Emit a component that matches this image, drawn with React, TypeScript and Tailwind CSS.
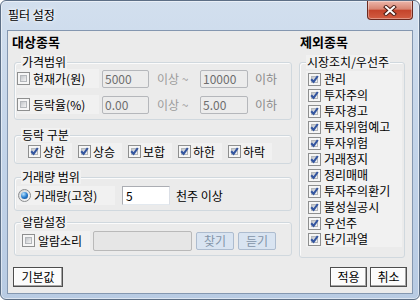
import React from "react";

const Check = ({ checked = false }: { checked?: boolean }) => (
    <span className="relative flex h-[13px] w-[13px] shrink-0 border border-[#8e8f8f] bg-[#f6f6f6] p-[2px]">
        <span className="flex-1 border border-[#b4b7bb] bg-gradient-to-br from-[#c3c6ca] to-[#f4f4f4]" />
        {checked && (
            <svg className="absolute left-0 top-0" width="11" height="11" viewBox="0 0 11 11">
                <path d="M2.2 5.2 L4.6 7.8 L8.8 2" fill="none" stroke="#3355a0" strokeWidth="2.1" />
            </svg>
        )}
    </span>
);

const Radio = () => (
    <span className="flex h-[13px] w-[13px] shrink-0 items-center justify-center rounded-full border border-[#8a8c8e] bg-gradient-to-br from-[#d2d4d6] to-[#fafafa]">
        <span className="h-[7px] w-[7px] rounded-full bg-[radial-gradient(circle_at_35%_30%,#b9e4ff,#2a7fd0_50%,#0b3f80)]" />
    </span>
);

const Group = ({
    label,
    className,
    children,
}: {
    label: string;
    className?: string;
    children: React.ReactNode;
}) => (
    <fieldset
        className={`rounded-[3px] border border-[#d0d8de] shadow-[inset_1px_1px_0_#fbfbfb] ${className}`}
    >
        <legend className="ml-[6px] bg-[#f1f1f1] px-[1px] leading-[14px]">{label}</legend>
        {children}
    </fieldset>
);

const Field = ({ value, className }: { value: string; className?: string }) => (
    <span
        className={`flex h-[18px] items-start rounded-[2px] border border-[#b5b7bb] bg-[#ececec] pl-[2px] pt-[1px] leading-[14px] text-[#6e6e6e] ${className}`}
    >
        {value}
    </span>
);

const Btn = ({ children, className }: { children: React.ReactNode; className?: string }) => (
    <button
        className={`flex h-[20px] items-center justify-center border border-[#4e4e4e] bg-[#fbfbfb] leading-[14px] shadow-[inset_-1px_-1px_0_#a6a6a6,inset_1px_1px_0_#fff] ${className}`}
    >
        {children}
    </button>
);

const exclude = [
    "관리",
    "투자주의",
    "투자경고",
    "투자위험예고",
    "투자위험",
    "거래정지",
    "정리매매",
    "투자주의환기",
    "불성실공시",
    "우선주",
    "단기과열",
];

export default function App() {
    return (
        <div className="h-[300px] w-[420px] bg-white font-['Noto_Sans_CJK_KR','Noto_Sans',sans-serif] text-[12px] text-black">
            <div className="flex h-full w-full flex-col rounded-[6px] border border-[#5d6f86] bg-gradient-to-b from-[#d2dfee] via-[#c3d4e9] to-[#b8cbe3] shadow-[inset_0_0_0_1px_rgba(255,255,255,0.5)]">
                {/* title bar */}
                <div className="flex h-[29px] shrink-0 items-start justify-between">
                    <span className="pl-[7px] pt-[6px] leading-[16px] [text-shadow:0_0_6px_#fff,0_0_3px_#fff]">
                        필터 설정
                    </span>
                    <button className="mr-[6px] flex h-[19px] w-[46px] items-center justify-center rounded-b-[4px] border border-t-0 border-[#6b2a20] bg-[linear-gradient(#ecb6aa,#d88572_45%,#c4442b_52%,#d25d42)] shadow-[inset_0_0_0_1px_rgba(255,255,255,0.35)]">
                        <svg width="14" height="11" viewBox="0 0 14 11">
                            <path d="M3 2 L11 9 M11 2 L3 9" stroke="#4a1d16" strokeWidth="4" strokeLinecap="square" />
                            <path d="M3 2 L11 9 M11 2 L3 9" stroke="#fff" strokeWidth="2" strokeLinecap="square" />
                        </svg>
                    </button>
                </div>

                {/* client area */}
                <div className="mx-[6px] flex h-[264px] shrink-0 flex-col border border-[#8497b0] bg-[#ebebeb]">
                    <div className="flex">
                        {/* left: 대상종목 */}
                        <div className="w-[284px] pl-[4px]">
                            <div className="h-[22px] text-[13px] font-bold leading-[22px]">대상종목</div>

                            <Group label="가격범위" className="ml-[2px] mt-[2px] w-[278px] pb-[5px]">
                                <div className="flex h-[19px] items-center pl-[2px]">
                                    <span className="flex h-full w-[82px] items-center gap-[3px] bg-[#f1f1f1]">
                                        <Check />
                                        현재가(원)
                                    </span>
                                    <Field value="5000" className="ml-[3px] w-[47px]" />
                                    <span className="w-[51px] pl-[8px] text-[#9c9c9c]">이상 ~</span>
                                    <Field value="10000" className="w-[48px]" />
                                    <span className="ml-[7px] text-[#8a8a8a]">이하</span>
                                </div>
                                <div className="mt-[7px] flex h-[19px] items-center pl-[2px]">
                                    <span className="flex h-full w-[82px] items-center gap-[3px] bg-[#f1f1f1]">
                                        <Check />
                                        등락율(%)
                                    </span>
                                    <Field value="0.00" className="ml-[3px] w-[47px]" />
                                    <span className="w-[51px] pl-[8px] text-[#9c9c9c]">이상 ~</span>
                                    <Field value="5.00" className="w-[48px]" />
                                    <span className="ml-[7px] text-[#8a8a8a]">이하</span>
                                </div>
                            </Group>

                            <Group label="등락 구분" className="ml-[2px] mt-[8px] w-[278px] pb-[2px]">
                                <div className="flex h-[19px] items-center gap-[6px] pl-[13px]">
                                    {["상한", "상승", "보합", "하한", "하락"].map((t) => (
                                        <span
                                            key={t}
                                            className="flex h-[17px] w-[44px] items-center gap-[2px] bg-[#f1f1f1]"
                                        >
                                            <Check checked />
                                            {t}
                                        </span>
                                    ))}
                                </div>
                            </Group>

                            <Group label="거래량 범위" className="ml-[2px] mt-[6px] w-[278px] pb-[5px]">
                                <div className="mt-[2px] flex h-[19px] items-center pl-[2px]">
                                    <span className="flex h-full w-[98px] items-center gap-[3px] bg-[#f1f1f1] pl-[1px]">
                                        <Radio />
                                        거래량(고정)
                                    </span>
                                    <span className="ml-[7px] flex h-[19px] w-[48px] items-start border border-[#abadb3] border-b-[#e3e9ef] border-r-[#dbdfe6] bg-white pl-[3px] pt-[1px] leading-[15px]">
                                        5
                                    </span>
                                    <span className="ml-[6px]">천주 이상</span>
                                </div>
                            </Group>

                            <Group label="알람설정" className="ml-[2px] mt-[4px] w-[278px] pb-[5px]">
                                <div className="mt-[2px] flex h-[19px] items-center pl-[5px]">
                                    <span className="flex h-full w-[70px] items-center gap-[3px] bg-[#f1f1f1] pl-[2px]">
                                        <Check />
                                        알람소리
                                    </span>
                                    <span className="ml-[3px] h-[20px] w-[99px] rounded-[2px] border border-[#b9b9b9] bg-[#e6e6e6]" />
                                    <span className="ml-[4px] flex h-[18px] w-[38px] items-center justify-center rounded-[2px] border border-[#adbccf] bg-[#d9e4f1] text-[#8394a8]">
                                        찾기
                                    </span>
                                    <span className="ml-[4px] flex h-[18px] w-[38px] items-center justify-center rounded-[2px] border border-[#adbccf] bg-[#d9e4f1] text-[#8394a8]">
                                        듣기
                                    </span>
                                </div>
                            </Group>
                        </div>

                        {/* right: 제외종목 */}
                        <div className="ml-[7px] w-[106px]">
                            <div className="h-[22px] pl-[1px] text-[13px] font-bold leading-[22px]">제외종목</div>
                            <Group label="시장조치/우선주" className="mt-[2px] w-[106px] pb-[10px]">
                                <div className="mt-[2px] flex flex-col">
                                    {exclude.map((t) => (
                                        <span
                                            key={t}
                                            className="ml-[6px] mr-[2px] flex h-[16px] items-center gap-[3px] bg-[#f1f1f1] pl-[2px]"
                                        >
                                            <Check checked />
                                            {t}
                                        </span>
                                    ))}
                                </div>
                            </Group>
                        </div>
                    </div>

                    {/* bottom buttons */}
                    <div className="mt-[9px] flex px-[5px]">
                        <Btn className="w-[50px]">기본값</Btn>
                        <div className="ml-auto flex gap-[3px]">
                            <Btn className="w-[37px]">적용</Btn>
                            <Btn className="w-[37px]">취소</Btn>
                        </div>
                    </div>
                </div>
            </div>
        </div>
    );
}
